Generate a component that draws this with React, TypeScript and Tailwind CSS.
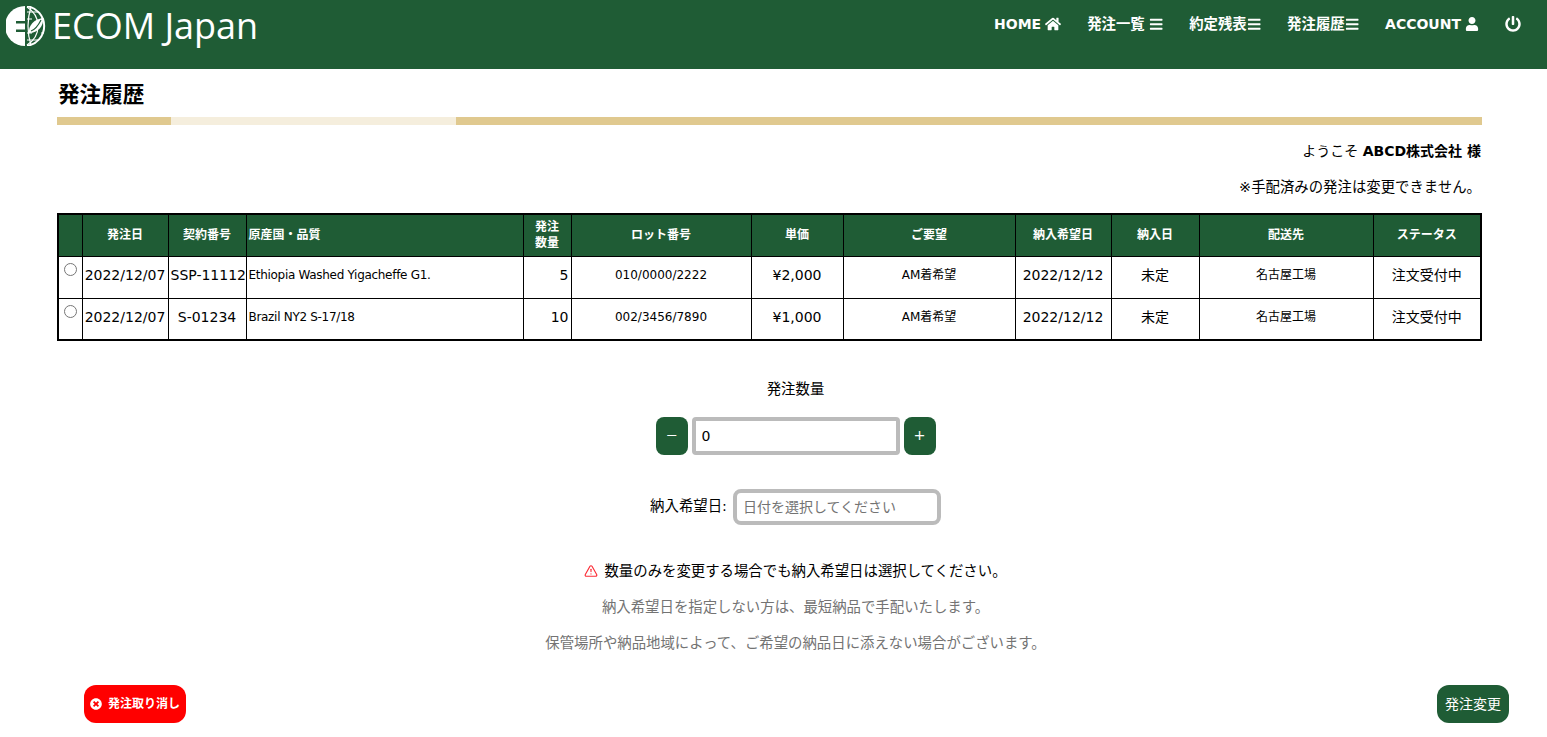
import React from 'react';
import { FaBars, FaHome, FaPowerOff, FaTimesCircle, FaUser } from 'react-icons/fa';
import { TriangleAlert } from 'lucide-react';

const orders = [
  { date: '2022/12/07', contract: 'SSP-11112', origin: 'Ethiopia Washed Yigacheffe G1.', qty: 5, lot: '010/0000/2222', price: '¥2,000' },
  { date: '2022/12/07', contract: 'S-01234', origin: 'Brazil NY2 S-17/18', qty: 10, lot: '002/3456/7890', price: '¥1,000' },
];

const Logo = () => (
  <svg viewBox="0 0 40 40" className="w-10 h-10 shrink-0">
    {/* left half with the E cut out */}
    <path d="M19 0a20 20 0 0 0 0 40z" fill="#fff" />
    <path d="M10 15h9v2.5h-9zM10 23.500h9v2.500h-9z" fill="#1f5c35" />
    {/* globe */}
    <g fill="none" stroke="#fff" strokeWidth="1.2">
      <path d="M21 .2a20 20 0 0 1 0 39.600" strokeWidth="2" />
      <path d="M21 1c8 5 11 12 11 19s-3 14-11 19" />
      <path d="M21 6h12M21 34h12M21 13h5M21 27h5M35 13h3M35 27h3" />
      <path d="M25 1c-2 6-3 12-3 19s1 13 3 19" />
    </g>
    <path d="M23 27c-1-7 5-14 14-15 1 8-5 15-14 15z" fill="#fff" />
    <path d="M25 25c3-1 7-5 10-11" fill="none" stroke="#1f5c35" strokeWidth="1.2" />
  </svg>
);

const Header = () => (
  <header className="h-[69px] bg-[#1f5c35] flex justify-between text-white">
    <div className="flex items-start pl-1.5 pt-1.5 gap-1.5">
      <Logo />
      <span className="text-4xl leading-10 font-['Open_Sans',sans-serif]">ECOM Japan</span>
    </div>
    <nav className="flex items-start gap-6.5 pr-6.5 pt-3.5 text-[0.9rem] font-bold leading-5">
      <a className="flex items-center gap-1 text-sm">HOME <FaHome className="text-base" /></a>
      <a className="flex items-center gap-1">発注一覧 <FaBars /></a>
      <a className="flex items-center">約定残表<FaBars /></a>
      <a className="flex items-center">発注履歴<FaBars /></a>
      <a className="flex items-center gap-1 text-sm">ACCOUNT <FaUser /></a>
      <a className="flex items-center h-5 text-base"><FaPowerOff /></a>
    </nav>
  </header>
);

const OrderTable = () => {
  const th = 'border border-black font-bold text-xs text-center px-0.5';
  const td = 'border border-black text-center px-0.5 pb-1';
  return (
    <table className="w-full table-fixed border-collapse border-2 border-black text-sm">
      <thead>
        <tr className="h-10.5 bg-[#1f5c35] text-white">
          <th className={`${th} w-6`}></th>
          <th className={`${th} w-21.5`}>発注日</th>
          <th className={`${th} w-19.5`}>契約番号</th>
          <th className={`${th} text-left`}>原産国・品質</th>
          <th className={`${th} w-12`}>発注<br />数量</th>
          <th className={`${th} w-45`}>ロット番号</th>
          <th className={`${th} w-23`}>単価</th>
          <th className={`${th} w-43`}>ご要望</th>
          <th className={`${th} w-24`}>納入希望日</th>
          <th className={`${th} w-22`}>納入日</th>
          <th className={`${th} w-43.5`}>配送先</th>
          <th className={`${th} w-27`}>ステータス</th>
        </tr>
      </thead>
      <tbody>
        {orders.map((o) => (
          <tr key={o.lot} className="h-10.5">
            <td className="border border-black align-top text-center">
              <input type="radio" name="order" className="mt-1.5" />
            </td>
            <td className={`${td} whitespace-nowrap`}>{o.date}</td>
            <td className={`${td} whitespace-nowrap`}>{o.contract}</td>
            <td className={`${td} text-left text-xs tracking-tight`}>{o.origin}</td>
            <td className={`${td} text-right`}>{o.qty}</td>
            <td className={`${td} text-xs`}>{o.lot}</td>
            <td className={td}>{o.price}</td>
            <td className={`${td} text-xs`}>AM着希望</td>
            <td className={`${td} whitespace-nowrap`}>2022/12/12</td>
            <td className={td}>未定</td>
            <td className={`${td} text-xs`}>名古屋工場</td>
            <td className={td}>注文受付中</td>
          </tr>
        ))}
      </tbody>
    </table>
  );
};

const App = () => (
  <div className="min-h-screen bg-white text-black font-['DejaVu_Sans','Noto_Sans_CJK_JP',sans-serif]">
    <Header />
    <main className="pl-14 pr-16">
      <div className="px-px">
        <h1 className="pt-3 pl-px text-[1.35rem] font-bold leading-7">発注履歴</h1>
        <div className="mt-2 flex h-2">
          <div className="w-[8%] bg-[#e0c98f]"></div>
          <div className="w-1/5 bg-[#f5eedd]"></div>
          <div className="flex-1 bg-[#e0c98f]"></div>
        </div>
        <p className="mt-4 pr-px text-right text-sm leading-5">ようこそ <b>ABCD株式会社 様</b></p>
        <p className="mt-4 pr-px text-right text-[0.9rem] leading-5">※手配済みの発注は変更できません。</p>
        <div className="mt-4">
          <OrderTable />
        </div>
      </div>
    </main>

    <section className="mt-9.5 pl-11 flex flex-col items-center text-[0.9rem]">
      <p className="leading-5">発注数量</p>
      <div className="mt-4.5 flex gap-1">
        <button className="w-8 h-9.5 rounded-lg bg-[#1f5c35] text-white">−</button>
        <input
          readOnly
          value="0"
          className="w-52 h-9.5 border-4 border-[#bbbbbb] rounded-sm px-1.5 text-sm outline-none"
        />
        <button className="w-8 h-9.5 rounded-lg bg-[#1f5c35] text-white">+</button>
      </div>
      <div className="mt-8.5 flex items-center gap-1.5">
        <label>納入希望日:</label>
        <input
          readOnly
          placeholder="日付を選択してください"
          className="w-52 h-9 border-4 border-[#bbbbbb] rounded-lg px-1.5 text-sm outline-none placeholder:text-neutral-500"
        />
      </div>
      <p className="mt-9 flex items-center gap-1.5 leading-5">
        <TriangleAlert className="w-3.5 h-3.5 text-red-500" />
        数量のみを変更する場合でも納入希望日は選択してください。
      </p>
      <p className="mt-4 leading-5 text-neutral-500">納入希望日を指定しない方は、最短納品で手配いたします。</p>
      <p className="mt-4 leading-5 text-neutral-500">保管場所や納品地域によって、ご希望の納品日に添えない場合がございます。</p>
    </section>

    <footer className="mt-8 pl-21 pr-9.5 flex justify-between items-start">
      <button className="h-9.5 px-1.5 rounded-xl bg-[#ff0000] text-white text-xs font-bold flex items-center gap-1.5">
        <FaTimesCircle /> 発注取り消し
      </button>
      <button className="h-9.5 px-2 rounded-xl bg-[#1f5c35] text-white text-sm">発注変更</button>
    </footer>
  </div>
);

export default App;
